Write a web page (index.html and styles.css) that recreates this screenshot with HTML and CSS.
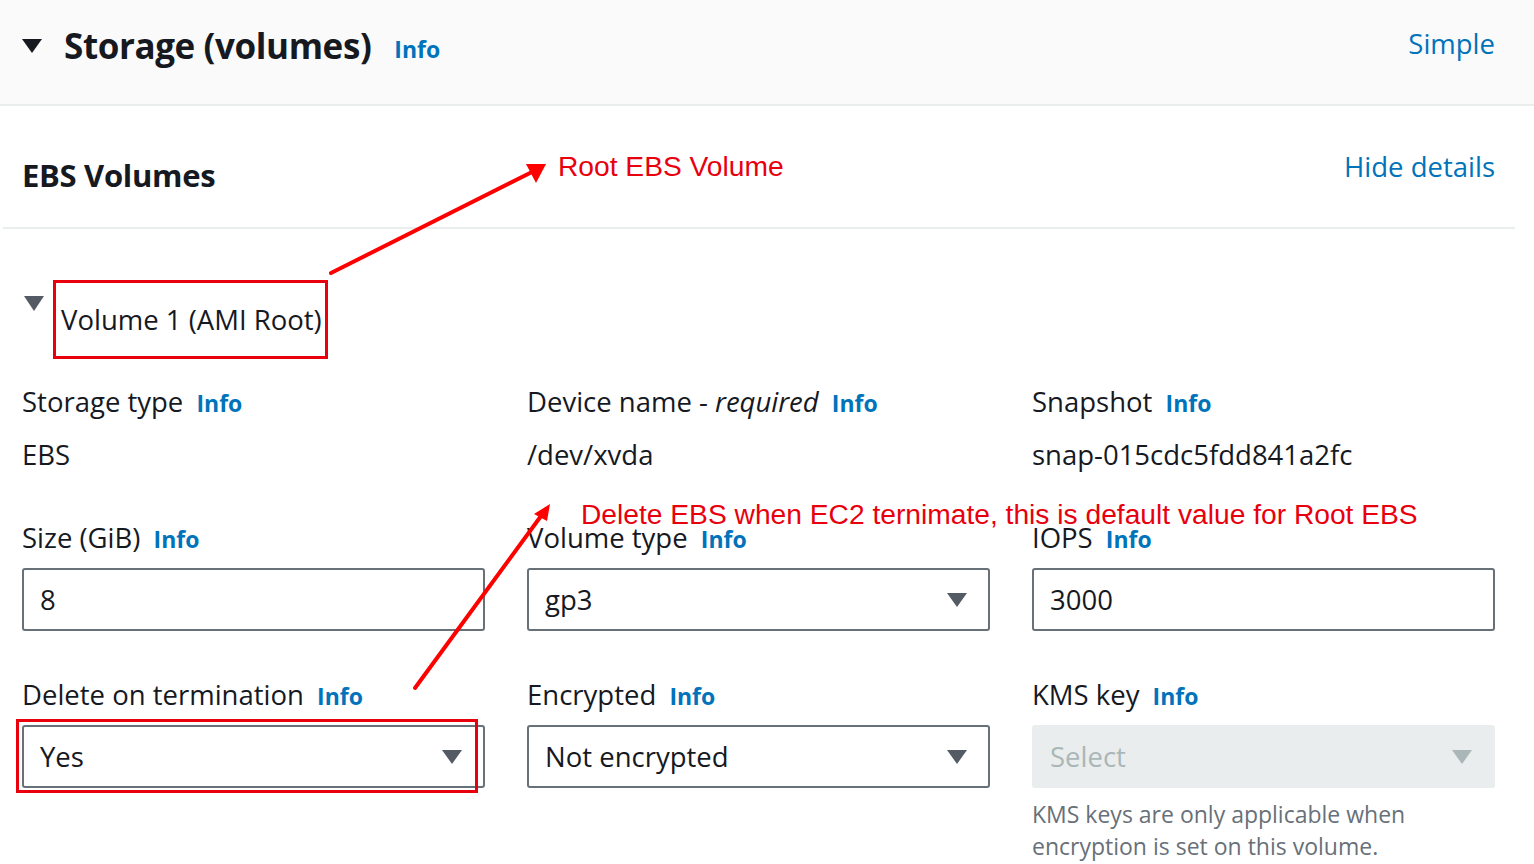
FILE: index.html
```html
<!DOCTYPE html>
<html lang="en">
<head>
<meta charset="utf-8">
<title>Storage (volumes)</title>
<link rel="stylesheet" href="styles.css">
</head>
<body>
<div class="page">
  <header class="section-head">
    <div class="section-title">
      <span class="caret-down"></span>
      <h2>Storage (volumes)</h2>
      <a class="info info-lg">Info</a>
    </div>
    <a class="link-lg link-simple">Simple</a>
  </header>

  <section class="panel">
    <div class="panel-head">
      <h3>EBS Volumes</h3>
      <a class="link-lg link-hide">Hide details</a>
    </div>

    <div class="panel-body">
      <div class="volume-head">
        <span class="caret-grey"></span>
        <span class="volume-title">Volume 1 (AMI Root)</span>
      </div>

      <div class="grid">
        <div class="field">
          <div class="label">Storage type <a class="info">Info</a></div>
          <div class="value">EBS</div>
        </div>
        <div class="field">
          <div class="label">Device name - <em>required</em> <a class="info">Info</a></div>
          <div class="value">/dev/xvda</div>
        </div>
        <div class="field">
          <div class="label">Snapshot <a class="info">Info</a></div>
          <div class="value">snap-015cdc5fdd841a2fc</div>
        </div>

        <div class="field">
          <div class="label">Size (GiB) <a class="info">Info</a></div>
          <div class="control">8</div>
        </div>
        <div class="field">
          <div class="label">Volume type <a class="info">Info</a></div>
          <div class="control select">gp3<span class="arrow"></span></div>
        </div>
        <div class="field">
          <div class="label">IOPS <a class="info">Info</a></div>
          <div class="control">3000</div>
        </div>

        <div class="field">
          <div class="label">Delete on termination <a class="info">Info</a></div>
          <div class="control select marked">Yes<span class="arrow"></span><span class="mark-box"></span></div>
        </div>
        <div class="field">
          <div class="label">Encrypted <a class="info">Info</a></div>
          <div class="control select">Not encrypted<span class="arrow"></span></div>
        </div>
        <div class="field">
          <div class="label">KMS key <a class="info">Info</a></div>
          <div class="control select disabled">Select<span class="arrow"></span></div>
          <div class="help">KMS keys are only applicable when<br>encryption is set on this volume.</div>
        </div>
      </div>
    </div>
  </section>

  <div class="note note-root">Root EBS Volume</div>
  <div class="note note-delete">Delete EBS when EC2 ternimate, this is default value for Root EBS</div>
  <svg class="arrows" width="1534" height="864" viewBox="0 0 1534 864">
    <g stroke="#f00" stroke-width="4" stroke-linecap="round" fill="none">
      <line x1="331" y1="273" x2="532" y2="172"/>
      <line x1="415" y1="688" x2="541" y2="516"/>
    </g>
    <g fill="#f00">
      <polygon points="546,164 526,164 536,183"/>
      <polygon points="550,504 534,514 547,521"/>
    </g>
  </svg>
</div>
</body>
</html>
```
FILE: styles.css
```css
* { box-sizing: border-box; }
html, body { margin: 0; padding: 0; background: #fff; }
body {
  font-family: "Open Sans", "Noto Sans", Arial, sans-serif;
  color: #16191f;
}
.page { position: relative; width: 1534px; height: 864px; overflow: hidden; }
a { text-decoration: none; cursor: pointer; }

.section-head {
  height: 106px;
  background: #fafafa;
  border-bottom: 2px solid #eaeded;
  display: flex;
  align-items: center;
  justify-content: space-between;
  padding: 0 39px 12px 22px;
}
.section-title { display: flex; align-items: center; }
.caret-down {
  width: 0; height: 0;
  border-left: 10px solid transparent;
  border-right: 10px solid transparent;
  border-top: 14px solid #16191f;
  margin-right: 22px;
}
.section-title h2 {
  margin: 0;
  font-size: 35px;
  font-weight: 700;
  letter-spacing: -0.4px;
  line-height: 44px;
}
.info { color: #0073bb; font-weight: 700; font-size: 23px; }
.info-lg { margin-left: 23px; margin-top: 6px; }
.link-lg { color: #0073bb; font-size: 27.5px; }
.link-simple { margin-bottom: 6px; }

.panel { margin: 0 19px 0 3px; }
.panel-head {
  height: 123px;
  border-bottom: 2px solid #eaeded;
  display: flex;
  align-items: center;
  justify-content: space-between;
  padding: 0 20px 8px 19px;
}
.panel-head h3 { margin: 24px 0 0; font-size: 31px; font-weight: 700; letter-spacing: -0.3px; }
.link-hide { margin-top: 8px; }

.panel-body { padding: 51px 0 0 19px; }
.volume-head { display: flex; align-items: flex-start; height: 79px; }
.caret-grey {
  width: 0; height: 0;
  border-left: 10px solid transparent;
  border-right: 10px solid transparent;
  border-top: 15px solid #545b64;
  margin: 16px 9px 0 2px;
}
.volume-title {
  border: 3px solid #e8000d;
  height: 79px;
  padding: 0 3px 0 5px;
  display: flex;
  align-items: center;
  font-size: 27.5px;
}

.grid {
  margin-top: 25px;
  display: grid;
  grid-template-columns: 463px 463px 463px;
  column-gap: 42px;
  row-gap: 46px;
}
.label { font-size: 27.5px; line-height: 36px; white-space: nowrap; }
.label .info { margin-left: 6px; }
.label em { font-style: italic; }
.value { margin: 16px 0 1px; font-size: 27.5px; line-height: 36px; }
.control {
  position: relative;
  margin-top: 11px;
  height: 63px;
  border: 2px solid #687078;
  border-radius: 3px;
  padding: 0 16px;
  display: flex;
  align-items: center;
  font-size: 27.5px;
}
.select .arrow {
  position: absolute;
  right: 21px;
  top: 23px;
  width: 0; height: 0;
  border-left: 10px solid transparent;
  border-right: 10px solid transparent;
  border-top: 14px solid #545b64;
}
.disabled { background: #eaeded; border-color: #eaeded; color: #aab7b8; }
.disabled .arrow { border-top-color: #aab7b8; }
.mark-box {
  position: absolute;
  left: -8px; top: -8px;
  width: 462px; height: 74px;
  border: 3px solid #e8000d;
}
.help { margin-top: 10px; font-size: 23px; line-height: 32px; color: #687078; }

.note {
  position: absolute;
  font-family: "Liberation Sans", Arial, sans-serif;
  color: #e8000d;
  font-size: 28.2px;
  line-height: 34px;
  white-space: nowrap;
}
.note-root { left: 558px; top: 149px; }
.note-delete { left: 581px; top: 497px; }
.arrows { position: absolute; left: 0; top: 0; pointer-events: none; }
```
